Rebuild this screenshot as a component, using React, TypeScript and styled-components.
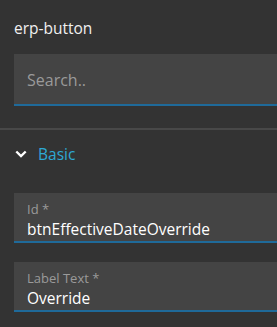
import React from "react";
import styled, { createGlobalStyle } from "styled-components";

const Global = createGlobalStyle`
  html, body { margin: 0; padding: 0; background: #333333; }
  body { font-family: "Open Sans", "Noto Sans", sans-serif; overflow: hidden; }
`;

const Panel = styled.div`
  width: 277px;
  height: 327px;
  background: #333333;
  overflow: hidden;
  display: flex;
  flex-direction: column;
`;

const Header = styled.div`
  padding: 17px 14px 0 14px;
  display: flex;
  flex-direction: column;
`;

const Title = styled.div`
  font-size: 15.5px;
  color: #f0f0f0;
  line-height: 22px;
`;

const SearchBox = styled.div`
  margin-top: 15px;
  height: 50px;
  width: 400px;
  background: #444444;
  border-bottom: 2px solid #1f6a9a;
  display: flex;
  align-items: center;
  padding: 2px 0 0 13px;
  box-sizing: border-box;
  height: 52px;
`;

const SearchText = styled.span`
  font-size: 16px;
  color: #9a9a9a;
`;

const Divider = styled.div`
  margin-top: 22px;
  height: 2px;
  background: #484848;
`;

const Section = styled.div`
  display: flex;
  align-items: center;
  gap: 11px;
  padding: 13px 0 0 15px;
  height: 22px;
`;

const SectionTitle = styled.span`
  font-size: 15.5px;
  line-height: 22px;
  color: #2ea9d4;
`;

const Fields = styled.div`
  display: flex;
  flex-direction: column;
  gap: 19px;
  padding: 28px 0 0 14px;
`;

const Field = styled.div`
  width: 400px;
  height: 50px;
  background: #444444;
  border-bottom: 2px solid #1f6a9a;
  padding: 7px 0 0 13px;
  box-sizing: border-box;
  display: flex;
  flex-direction: column;
`;

const FieldLabel = styled.span`
  font-size: 13px;
  line-height: 18px;
  color: #9a9a9a;
`;

const FieldValue = styled.span`
  font-size: 15.5px;
  line-height: 22px;
  color: #ffffff;
`;

const Chevron = () => (
  <svg width="12" height="12" viewBox="0 0 12 12">
    <path d="M1.3 3.5 L6 8 L10.7 3.5" stroke="#ffffff" strokeWidth="2.4" fill="none" />
  </svg>
);

export default function App() {
  return (
    <Panel>
      <Global />
      <Header>
        <Title>erp-button</Title>
        <SearchBox>
          <SearchText>Search..</SearchText>
        </SearchBox>
      </Header>
      <Divider />
      <Section>
        <Chevron />
        <SectionTitle>Basic</SectionTitle>
      </Section>
      <Fields>
        <Field>
          <FieldLabel>Id *</FieldLabel>
          <FieldValue>btnEffectiveDateOverride</FieldValue>
        </Field>
        <Field>
          <FieldLabel>Label Text *</FieldLabel>
          <FieldValue>Override</FieldValue>
        </Field>
      </Fields>
    </Panel>
  );
}
